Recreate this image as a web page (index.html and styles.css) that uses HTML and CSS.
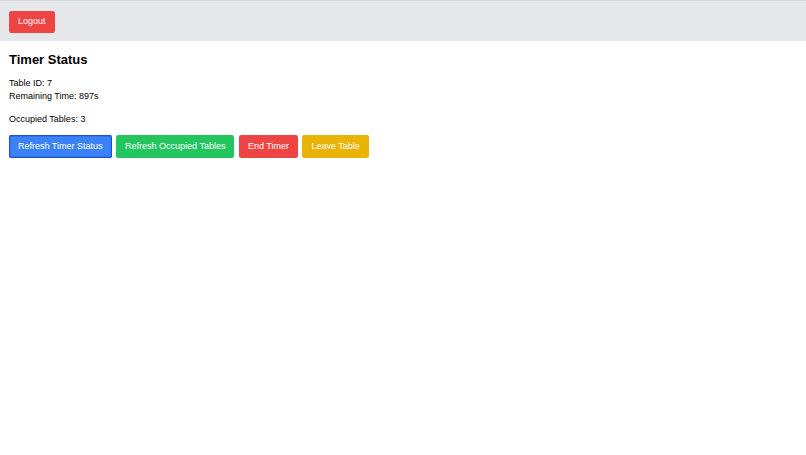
FILE: index.html
```html
<!DOCTYPE html>
<html>
<head>
<meta charset="utf-8">
<link rel="stylesheet" href="styles.css">
</head>
<body>
<header class="topbar">
  <button class="btn btn-red">Logout</button>
</header>
<main class="content">
  <h2 class="title">Timer Status</h2>
  <p class="info">Table ID: 7<br>Remaining Time: 897s</p>
  <p class="info">Occupied Tables: 3</p>
  <div class="actions">
    <button class="btn btn-blue focused">Refresh Timer Status</button>
    <button class="btn btn-green">Refresh Occupied Tables</button>
    <button class="btn btn-red">End Timer</button>
    <button class="btn btn-yellow">Leave Table</button>
  </div>
</main>
</body>
</html>
```
FILE: styles.css
```css
html, body {
  margin: 0;
  padding: 0;
  background: #ffffff;
  font-family: "Liberation Sans", Arial, sans-serif;
  color: #000;
}
.topbar {
  background: #e5e7eb;
  border-top: 1px solid #d6d8dc;
  box-sizing: border-box;
  padding: 9px 9px;
  height: 40.5px;
}
.btn {
  font-family: "Liberation Sans", Arial, sans-serif;
  font-size: 9px;
  line-height: 13.5px;
  color: #fff;
  border: none;
  border-radius: 2.25px;
  height: 22.5px;
  padding: 0 9px;
  margin: 0;
  cursor: pointer;
  box-sizing: border-box;
}
.btn-red { background: #ef4444; }
.btn-blue { background: #3b82f6; }
.btn-green { background: #22c55e; }
.btn-yellow { background: #eab308; }
.focused { box-shadow: inset 0 0 0 1.2px #1d4ed8; }
.content {
  padding: 9px 9px;
}
.title {
  font-size: 13px;
  font-weight: bold;
  line-height: 18px;
  margin: 0 0 9px;
  padding-top: 1px;
}
.info {
  font-size: 9px;
  line-height: 13.5px;
  margin: 0 0 9px;
}
.info:first-of-type {
  margin-top: -1px;
}
.actions {
  display: flex;
  gap: 4.5px;
}
```
